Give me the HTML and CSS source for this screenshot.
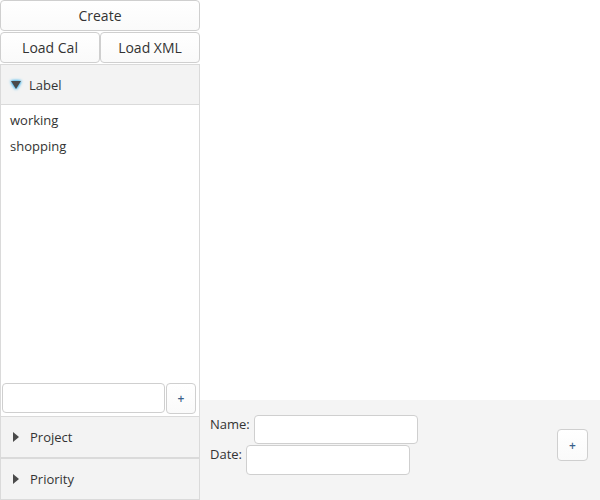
FILE: index.html
```html
<!DOCTYPE html>
<html>
<head>
<meta charset="utf-8">
<link rel="stylesheet" href="styles.css">
</head>
<body>
<div class="app">
  <div class="side">
    <button class="btn btn-full">Create</button>
    <div class="btn-row">
      <button class="btn">Load Cal</button>
      <button class="btn">Load XML</button>
    </div>
    <div class="pane open">
      <div class="pane-head"><span class="arrow-down"></span>Label</div>
      <div class="pane-body">
        <ul class="list">
          <li>working</li>
          <li>shopping</li>
        </ul>
        <div class="add-row">
          <input class="field" type="text">
          <button class="btn small">+</button>
        </div>
      </div>
    </div>
    <div class="pane">
      <div class="pane-head"><span class="arrow-right"></span>Project</div>
    </div>
    <div class="pane">
      <div class="pane-head"><span class="arrow-right"></span>Priority</div>
    </div>
  </div>
  <div class="main">
    <div class="canvas"></div>
    <div class="form">
      <div class="fields">
        <div class="frow"><span class="lbl">Name:</span><input class="field name" type="text"></div>
        <div class="frow"><span class="lbl">Date:</span><input class="field date" type="text"></div>
      </div>
      <button class="btn small big-plus">+</button>
    </div>
  </div>
</div>
</body>
</html>
```

FILE: styles.css
```css
* { box-sizing: border-box; }
html, body { margin: 0; padding: 0; background: #fff; }
body { font-family: "Open Sans", "Noto Sans", sans-serif; font-size: 13px; color: #333; }
.app { display: flex; width: 600px; height: 500px; }
.side { width: 200px; display: flex; flex-direction: column; }
.btn {
  font-family: inherit; font-size: 14px; color: #333;
  background: linear-gradient(#ffffff, #fafafa);
  border: 1px solid #cfcfcf; border-radius: 4px;
  padding: 0; cursor: default;
}
.btn-full { height: 31px; width: 200px; margin-bottom: 1px; }
.btn-row { display: flex; height: 31px; margin-bottom: 1px; }
.btn-row .btn { flex: 1; height: 31px; }
.pane { display: flex; flex-direction: column; }
.pane.open { flex: 1; }
.pane-head {
  height: 42px; background: #f3f3f3; border: 1px solid #dadada;
  display: flex; align-items: center; padding-left: 11px; color: #333;
}
.open .pane-head { height: 41px; padding-left: 10px; }
.arrow-down {
  width: 0; height: 0; margin-right: 8px; margin-top: 1px;
  border-left: 5px solid transparent; border-right: 5px solid transparent;
  border-top: 8px solid #4a4a4a;
  filter: drop-shadow(0 0 1.5px #2ea8e6) drop-shadow(0 0 1px #5cc3f2);
}
.arrow-right {
  width: 0; height: 0; margin-left: 1px; margin-right: 11px;
  border-top: 5px solid transparent; border-bottom: 5px solid transparent;
  border-left: 6px solid #4a4a4a;
}
.pane-body {
  flex: 1; border: 1px solid #dadada; border-top: none; border-bottom: none;
  display: flex; flex-direction: column; background: #fff;
}
.list { list-style: none; margin: 0; padding: 2px 0 0 0; flex: 1; }
.list li { height: 26px; line-height: 26px; padding-left: 9px; color: #333; }
.add-row { display: flex; gap: 1px; padding: 0 3px 2px 1px; }
.field {
  height: 30px; border: 1px solid #cfcfcf; border-radius: 4px; background: #fff;
  font-family: inherit; font-size: 13px; outline: none; min-width: 0;
}
.add-row .field { flex: 1; }
.small { flex-shrink: 0; width: 30px; height: 31px; font-size: 12px; color: #3a5f8a; font-weight: 600; }
.main { flex: 1; display: flex; flex-direction: column; }
.canvas { height: 400px; background: #fff; }
.form {
  flex: 1; background: #f4f4f4; display: flex; align-items: flex-start;
  padding: 15px 12px 0 10px; justify-content: space-between;
}
.fields { display: flex; flex-direction: column; gap: 1px; }
.frow { display: flex; align-items: flex-start; }
.lbl { margin-top: 0; margin-right: 3px; line-height: 18px; }
.field.name { width: 164px; height: 29px; margin-left: 1px; }
.field.date { width: 164px; height: 30px; margin-left: 1px; }
.big-plus { width: 31px; height: 32px; margin-top: 14px; }
```
